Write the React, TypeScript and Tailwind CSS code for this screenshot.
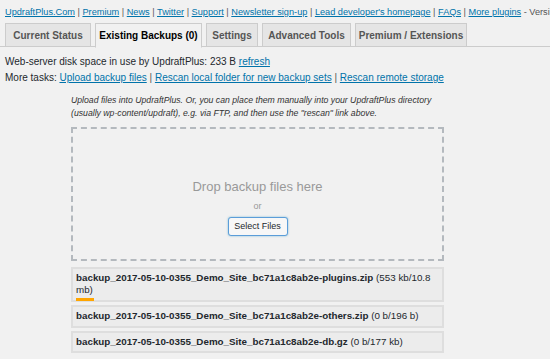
import React from "react";

const L = ({ children }: { children: React.ReactNode }) => (
  <a className="text-[#0073aa] underline decoration-[#0073aa]">{children}</a>
);
const Sep = () => <span className="text-[#555]"> | </span>;

const tabs = [
  { label: "Current Status", w: "w-[86px]", active: false },
  { label: "Existing Backups (0)", w: "w-[107px]", active: true },
  { label: "Settings", w: "w-[52px]", active: false },
  { label: "Advanced Tools", w: "w-[89px]", active: false },
  { label: "Premium / Extensions", w: "w-[112px]", active: false },
];

export default function App() {
  return (
    <div
      className="w-[550px] h-[359px] overflow-hidden bg-[#f1f1f1] text-[#23282d]"
      style={{ fontFamily: '"Liberation Sans", Arial, sans-serif' }}
    >
      <div className="pl-[5px] pt-[5px] h-[23px] text-[9.2px] leading-[14px] whitespace-nowrap overflow-hidden">
        <L>UpdraftPlus.Com</L>
        <Sep />
        <L>Premium</L>
        <Sep />
        <L>News</L>
        <Sep />
        <L>Twitter</L>
        <Sep />
        <L>Support</L>
        <Sep />
        <L>Newsletter sign-up</L>
        <Sep />
        <L>Lead developer's homepage</L>
        <Sep />
        <L>FAQs</L>
        <Sep />
        <L>More plugins</L>
        <span className="text-[#555]"> - Versi</span>
      </div>

      <div className="flex gap-[4px] pl-[5px] border-b border-[#ccc] h-[24px]">
        {tabs.map((t) => (
          <div
            key={t.label}
            className={`${t.w} flex items-center justify-center border border-[#ccc] text-[10px] font-semibold whitespace-nowrap ${
              t.active ? "bg-[#f1f1f1] border-b-[#f1f1f1] text-[#000] h-[25px]" : "bg-[#e5e5e5] text-[#555] h-[24px]"
            }`}
          >
            {t.label}
          </div>
        ))}
      </div>

      <div className="pl-[5px] pt-[7px] text-[10px] leading-[16px]">
        <div className="text-[#23282d]">
          Web-server disk space in use by UpdraftPlus: 233 B <L>refresh</L>
        </div>
        <div>
          More tasks: <L>Upload backup files</L>
          <Sep />
          <L>Rescan local folder for new backup sets</L>
          <Sep />
          <L>Rescan remote storage</L>
        </div>
      </div>

      <div className="ml-[71px] w-[373px]">
        <p className="mt-[8px] italic text-[8.7px] leading-[13px] text-[#333] whitespace-nowrap">
          Upload files into UpdraftPlus. Or, you can place them manually into your UpdraftPlus directory
          <br />
          (usually wp-content/updraft), e.g. via FTP, and then use the "rescan" link above.
        </p>

        <div className="mt-[7px] h-[134px] border-2 border-dashed border-[#b4b9be] flex flex-col items-center">
          <div className="mt-[50px] text-[13px] leading-[16px] text-[#999]">Drop backup files here</div>
          <div className="mt-[5px] text-[9px] leading-[12px] text-[#999]">or</div>
          <button className="mt-[5px] w-[60px] h-[19px] rounded-[3px] border border-[#5b9dd9] bg-[#f7f7f7] text-[9px] font-medium text-[#23282d] shadow-[0_0_2px_rgba(30,140,190,0.6)]">
            Select Files
          </button>
        </div>

        <div className="mt-[6px] flex flex-col gap-[3px] text-[9.8px]">
          <div className="h-[35px] border-2 border-[#dedede] bg-[#ececec] px-[3px] pt-[3px] leading-[12px]">
            <span className="font-semibold">backup_2017-05-10-0355_Demo_Site_bc71a1c8ab2e-plugins.zip</span>{" "}
            <span>(553 kb/10.8</span>
            <br />
            <span>mb)</span>
            <div className="mt-[2px] w-[18px] h-[3px] bg-[#ffa500]" />
          </div>
          <div className="h-[23px] border-2 border-[#dedede] bg-[#ececec] px-[3px] flex items-center">
            <span className="font-semibold">backup_2017-05-10-0355_Demo_Site_bc71a1c8ab2e-others.zip</span>
            &nbsp;<span>(0 b/196 b)</span>
          </div>
          <div className="h-[22px] border-2 border-[#dedede] bg-[#ececec] px-[3px] flex items-center">
            <span className="font-semibold">backup_2017-05-10-0355_Demo_Site_bc71a1c8ab2e-db.gz</span>
            &nbsp;<span>(0 b/177 kb)</span>
          </div>
        </div>
      </div>
    </div>
  );
}
